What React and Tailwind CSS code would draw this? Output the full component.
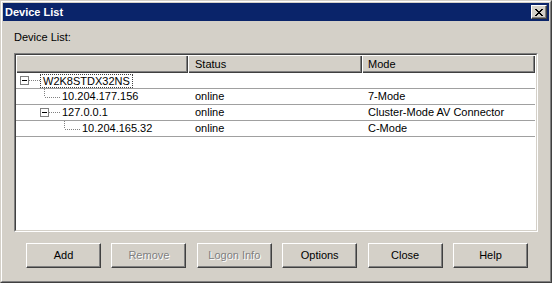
import React from 'react';

const rows = [
  { name: 'W2K8STDX32NS', status: '', mode: '', kind: 'root' },
  { name: '10.204.177.156', status: 'online', mode: '7-Mode', kind: 'leaf1' },
  { name: '127.0.0.1', status: 'online', mode: 'Cluster-Mode AV Connector', kind: 'node' },
  { name: '10.204.165.32', status: 'online', mode: 'C-Mode', kind: 'leaf2' },
];

const buttons = [
  { label: 'Add' },
  { label: 'Remove', disabled: true },
  { label: 'Logon Info', disabled: true },
  { label: 'Options' },
  { label: 'Close' },
  { label: 'Help' },
];

function Box({ x }) {
  return (
    <g>
      <rect x={x + 0.5} y={3.5} width={8} height={8} fill="#fff" stroke="#808080" />
      <line x1={x + 2} y1={7.5} x2={x + 7} y2={7.5} stroke="#000" />
    </g>
  );
}

function Connector({ kind }) {
  const dot = { stroke: '#808080', strokeDasharray: '1 1' };
  if (kind === 'root') {
    return (
      <svg width="24" height="16" className="shrink-0">
        <Box x={4} />
        <line x1={13} y1={7.5} x2={24} y2={7.5} {...dot} />
      </svg>
    );
  }
  if (kind === 'leaf1') {
    return (
      <svg width="46" height="16" className="shrink-0">
        <line x1={28.5} y1={0} x2={28.5} y2={8} {...dot} />
        <line x1={29} y1={8.5} x2={44} y2={8.5} {...dot} />
      </svg>
    );
  }
  if (kind === 'node') {
    return (
      <svg width="46" height="16" className="shrink-0">
        <Box x={24} />
        <line x1={33} y1={7.5} x2={44} y2={7.5} {...dot} />
      </svg>
    );
  }
  return (
    <svg width="66" height="16" className="shrink-0">
      <line x1={48.5} y1={0} x2={48.5} y2={8} {...dot} />
      <line x1={49} y1={8.5} x2={64} y2={8.5} {...dot} />
    </svg>
  );
}

export default function App() {
  return (
    <div className="w-[552px] h-[283px] border border-t-[#d4d0c8] border-l-[#d4d0c8] border-b-[#404040] border-r-[#404040] font-['Liberation_Sans',Arial,sans-serif] text-[11px] text-black select-none">
      <div className="h-full border border-t-white border-l-white border-b-[#808080] border-r-[#808080] bg-[#d4d0c8] p-px flex flex-col">
        {/* title bar */}
        <div className="h-[18px] bg-[#0a246a] flex items-center justify-between pl-[2px] pr-[2px]">
          <span className="text-white font-bold text-[11px] leading-none">Device List</span>
          <div className="w-[16px] h-[14px] bg-[#d4d0c8] border border-t-white border-l-white border-b-[#404040] border-r-[#404040] flex items-center justify-center shadow-[inset_-1px_-1px_0_#808080]">
            <svg width="8" height="7" viewBox="0 0 8 7">
              <path d="M0 0h2v1h1v1h2V1h1V0h2v1H7v1H6v1H5v1h1v1h1v1h1v1H6V6H5V5H3v1H2v1H0V6h1V5h1V4h1V3H2V2H1V1H0z" fill="#000" />
            </svg>
          </div>
        </div>

        {/* body */}
        <div className="flex-1 flex flex-col pl-[11px]">
          <div className="mt-[10px] leading-[13px]">Device List:</div>

          {/* list view */}
          <div className="mt-[9px] w-[524px] h-[179px] border border-t-[#808080] border-l-[#808080] border-b-white border-r-white">
            <div className="h-full border border-t-[#404040] border-l-[#404040] border-b-[#d4d0c8] border-r-[#d4d0c8] bg-white flex flex-col">
              <div className="flex h-[18px] shrink-0">
                <div className="w-[172px] bg-[#d4d0c8] shadow-[inset_1px_1px_0_#fff,inset_-1px_-1px_0_#404040,inset_-2px_-2px_0_#808080]" />
                <div className="w-[174px] bg-[#d4d0c8] pl-[7px] flex items-center shadow-[inset_1px_1px_0_#fff,inset_-1px_-1px_0_#404040,inset_-2px_-2px_0_#808080]">Status</div>
                <div className="w-[173px] bg-[#d4d0c8] pl-[6px] flex items-center shadow-[inset_1px_1px_0_#fff,inset_-1px_-1px_0_#404040,inset_-2px_-2px_0_#808080]">Mode</div>
              </div>
              {rows.map((r) => (
                <div key={r.name} className="flex h-[16px] w-[519px] border-b border-[#a0a0a0] items-center">
                  <div className="w-[172px] flex items-center h-full">
                    <Connector kind={r.kind} />
                    {r.kind === 'root' ? (
                      <span className="h-[14px] leading-[12px] px-[2px] border border-dotted border-[#404040]">{r.name}</span>
                    ) : (
                      <span>{r.name}</span>
                    )}
                  </div>
                  <div className="w-[174px] pl-[7px]">{r.status}</div>
                  <div className="w-[173px] pl-[6px]">{r.mode}</div>
                </div>
              ))}
            </div>
          </div>

          {/* buttons */}
          <div className="mt-[11px] ml-[12px] w-[502px] flex justify-between">
            {buttons.map((b) => (
              <div
                key={b.label}
                className="w-[75px] h-[25px] bg-[#d4d0c8] border border-t-white border-l-white border-b-[#404040] border-r-[#404040] shadow-[inset_-1px_-1px_0_#808080] flex items-center justify-center"
              >
                <span className={b.disabled ? 'text-[#808080] [text-shadow:1px_1px_0_#fff]' : ''}>{b.label}</span>
              </div>
            ))}
          </div>
        </div>
      </div>
    </div>
  );
}
